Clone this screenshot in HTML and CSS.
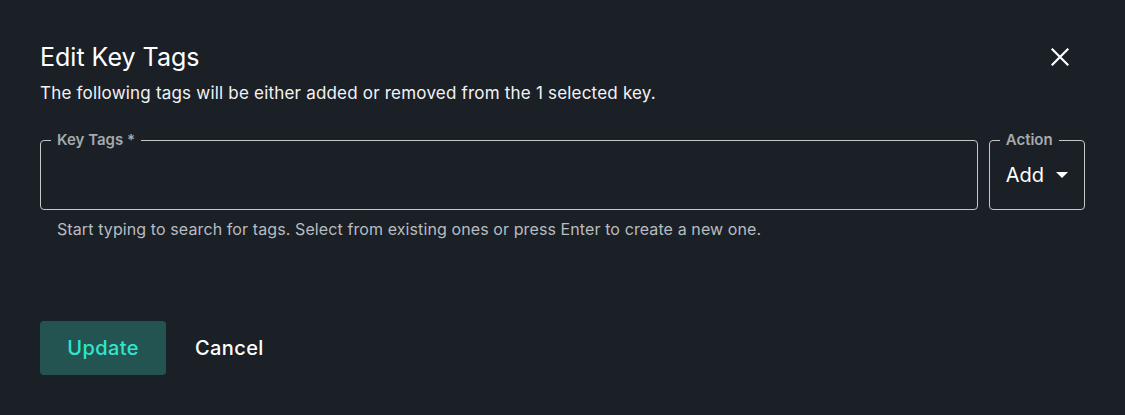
FILE: index.html
```html
<!DOCTYPE html>
<html>
<head>
<meta charset="utf-8">
<link rel="stylesheet" href="styles.css">
</head>
<body>
<div class="dialog">
  <div class="header">
    <h1 class="title">Edit Key Tags</h1>
    <button class="close" aria-label="Close">
      <svg width="18" height="18" viewBox="0 0 18 18"><path d="M1.5 1.5 L16.5 16.5 M16.5 1.5 L1.5 16.5" stroke="#fff" stroke-width="2.2" stroke-linecap="square"/></svg>
    </button>
  </div>
  <p class="subtitle">The following tags will be either added or removed from the 1 selected key.</p>
  <div class="fields">
    <div class="field-col">
      <fieldset class="box tags">
        <legend>Key Tags *</legend>
      </fieldset>
      <div class="helper">Start typing to search for tags. Select from existing ones or press Enter to create a new one.</div>
    </div>
    <fieldset class="box action">
      <legend>Action</legend>
      <div class="select"><span>Add</span><svg width="12" height="6" viewBox="0 0 12 6"><path d="M0 0 H12 L6 6 Z" fill="#fff"/></svg></div>
    </fieldset>
  </div>
  <div class="actions">
    <button class="btn primary">Update</button>
    <button class="btn text">Cancel</button>
  </div>
</div>
</body>
</html>
```
FILE: styles.css
```css
html, body {
  margin: 0;
  padding: 0;
  background: #1b2027;
  font-family: Inter, "Noto Sans", sans-serif;
  color: #fff;
}
.dialog {
  padding: 40px 40px 0 40px;
  width: 1125px;
  height: 415px;
  box-sizing: border-box;
}
.header {
  display: flex;
  justify-content: space-between;
  align-items: center;
  height: 34px;
}
.title {
  margin: 0;
  font-size: 25px;
  font-weight: 400;
  line-height: 34px;
}
.close {
  background: none;
  border: 0;
  padding: 0;
  margin-right: 16px;
  width: 18px;
  height: 18px;
  display: flex;
}
.subtitle {
  margin: 8px 0 0 0;
  font-size: 17px;
  letter-spacing: 0.2px;
  line-height: 22px;
  color: #f2f3f4;
}
.fields {
  display: flex;
  gap: 11px;
  margin-top: 27px;
}
.field-col {
  flex: 1;
}
.box {
  margin: 0;
  border: 1px solid #c4c7cb;
  border-radius: 4px;
  padding: 0 16px;
  height: 79px;
  box-sizing: border-box;
}
.box legend {
  font-size: 15px;
  font-weight: 600;
  color: #a5a9ad;
  padding: 0 6px;
  margin-left: -6px;
  line-height: 18px;
}
.helper {
  font-size: 16px;
  letter-spacing: 0.1px;
  color: #b8bcc0;
  margin: 8px 0 0 17px;
  line-height: 22px;
}
.action {
  width: 96px;
}
.select {
  display: flex;
  align-items: center;
  gap: 12px;
  margin-top: 14px;
  font-size: 20px;
}
.actions {
  display: flex;
  align-items: center;
  gap: 8px;
  margin-top: 81px;
}
.btn {
  font-family: Inter, "Noto Sans", sans-serif;
  font-size: 20px;
  font-weight: 500;
  letter-spacing: 0.4px;
  border: 0;
  border-radius: 4px;
  height: 54px;
  cursor: pointer;
}
.primary {
  background: #245451;
  color: #2ee6cc;
  width: 126px;
}
.text {
  background: none;
  color: #fff;
  padding: 0 21px;
}
```
